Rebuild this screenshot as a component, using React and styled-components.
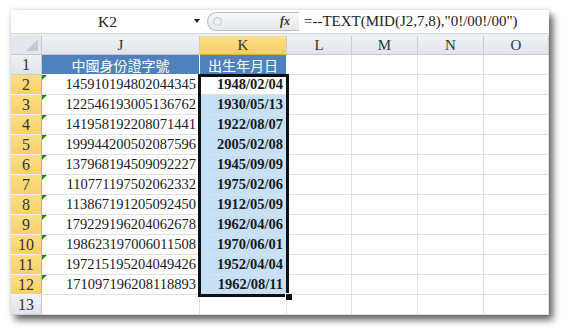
import styled, {createGlobalStyle} from "styled-components";

const GlobalStyle = createGlobalStyle`
  html, body {
    margin: 0;
    padding: 0;
    background: #ffffff;
  }
`;

const SERIF = `"Liberation Serif", "Times New Roman", serif`;
const CJK = `"Noto Sans CJK TC", "Noto Sans", sans-serif`;

const Page = styled.div`
  width: 567px;
  height: 335px;
  padding: 10px 0 0 11px;
  box-sizing: border-box;
`;

const Window = styled.div`
  width: 538px;
  background: #fff;
  box-shadow: 4px 5px 7px rgba(0, 0, 0, 0.6), 0 0 5px rgba(0, 0, 0, 0.12);
`;

const FormulaBar = styled.div`
  display: flex;
  align-items: center;
  height: 23px;
  background: #fff;
  border-bottom: 1px solid #d4d7dc;
`;

const NameBox = styled.div`
  position: relative;
  width: 193px;
  height: 100%;
  display: flex;
  align-items: center;
  justify-content: center;
  font-family: ${SERIF};
  font-size: 15.5px;
  color: #222;
`;

const Arrow = styled.span`
  position: absolute;
  right: 4px;
  top: 9px;
  width: 0;
  height: 0;
  border-left: 3px solid transparent;
  border-right: 3px solid transparent;
  border-top: 4px solid #222;
`;

const FxPill = styled.div`
  display: flex;
  align-items: center;
  justify-content: space-between;
  width: 92px;
  height: 19px;
  margin-left: 3px;
  padding: 0 9px 0 5px;
  box-sizing: border-box;
  border: 1px solid #b9bec6;
  border-right: none;
  border-radius: 10px 0 0 10px;
  background: linear-gradient(#f7f8f9, #e6e8eb);
`;

const Knob = styled.span`
  width: 7px;
  height: 7px;
  border-radius: 50%;
  border: 1px solid #c6cacf;
  background: #eef0f2;
`;

const Fx = styled.span`
  font-family: ${SERIF};
  font-style: italic;
  font-weight: bold;
  font-size: 12px;
  color: #333;
`;

const FormulaText = styled.div`
  flex: 1;
  padding-left: 5px;
  font-family: ${SERIF};
  font-size: 15px;
  color: #222;
  white-space: nowrap;
`;

const Strip = styled.div`
  height: 2px;
  background: #eceef1;
`;

const SheetArea = styled.div`
  position: relative;
`;

const Grid = styled.div`
  display: grid;
  grid-template-columns: 31px 158px 87px 65px 66px 66px 65px;
  grid-template-rows: 19px repeat(13, 20px);
`;

const Corner = styled.div`
  position: relative;
  background: #e4e8ee;
  border-right: 1px solid #c3c8cf;
  border-bottom: 1px solid #c3c8cf;
  &::after {
    content: "";
    position: absolute;
    right: 3px;
    bottom: 3px;
    border-left: 12px solid transparent;
    border-bottom: 12px solid #c6cbd1;
  }
`;

const ColHead = styled.div`
  display: flex;
  align-items: center;
  justify-content: center;
  font-family: ${SERIF};
  font-size: 15px;
  color: #333;
  border-right: 1px solid #c9cdd3;
  border-bottom: 1px solid ${(p) => (p.$active ? "#e2b43d" : "#c3c8cf")};
  background: ${(p) =>
    p.$active ? "linear-gradient(#fbe28f, #f6cf5e)" : "linear-gradient(#eef1f5, #e1e5eb)"};
`;

const RowHead = styled.div`
  display: flex;
  align-items: center;
  justify-content: center;
  font-family: ${SERIF};
  font-size: 16px;
  color: #333;
  border-right: 1px solid ${(p) => (p.$active ? "#e2b43d" : "#c3c8cf")};
  border-bottom: 1px solid ${(p) => (p.$active ? "#f2f2f2" : "#c9cdd3")};
  background: ${(p) =>
    p.$active ? "linear-gradient(#fbdf86, #f6d06a)" : "linear-gradient(#eef1f5, #e1e5eb)"};
`;

const Cell = styled.div`
  position: relative;
  display: flex;
  align-items: center;
  justify-content: ${(p) => (p.$center ? "center" : "flex-end")};
  padding: 0 ${(p) => (p.$center ? 0 : 3)}px 0 0;
  box-sizing: border-box;
  border-right: 1px solid ${(p) => (p.$head ? "#ffffff" : "#dfe0e1")};
  border-bottom: 1px solid ${(p) => (p.$head ? "#ffffff" : "#dfe0e1")};
  background: ${(p) => p.$bg || "#fff"};
  font-family: ${(p) => (p.$head ? CJK : SERIF)};
  font-size: ${(p) => (p.$head ? 14 : 14.5)}px;
  font-weight: ${(p) => (p.$bold ? 700 : 400)};
  color: ${(p) => (p.$head ? "#fff" : "#1a1a1a")};
  white-space: nowrap;
  overflow: hidden;
  &::before {
    content: "";
    display: ${(p) => (p.$flag ? "block" : "none")};
    position: absolute;
    left: 0;
    top: 0;
    border-top: 5px solid #1f8a2a;
    border-right: 5px solid transparent;
  }
`;

const Selection = styled.div`
  position: absolute;
  left: 187px;
  top: 38px;
  width: 91px;
  height: 223px;
  box-sizing: border-box;
  border: 3px solid #111;
  pointer-events: none;
`;

const Handle = styled.div`
  position: absolute;
  left: 274px;
  top: 257px;
  width: 6px;
  height: 6px;
  background: #111;
  border: 1px solid #fff;
`;

const ids = [
  ["145910194802044345", "1948/02/04"],
  ["122546193005136762", "1930/05/13"],
  ["141958192208071441", "1922/08/07"],
  ["199944200502087596", "2005/02/08"],
  ["137968194509092227", "1945/09/09"],
  ["110771197502062332", "1975/02/06"],
  ["113867191205092450", "1912/05/09"],
  ["179229196204062678", "1962/04/06"],
  ["198623197006011508", "1970/06/01"],
  ["197215195204049426", "1952/04/04"],
  ["171097196208118893", "1962/08/11"],
];

const cols = ["J", "K", "L", "M", "N", "O"];

const Blank = () => (
  <>
    <Cell />
    <Cell />
    <Cell />
    <Cell />
  </>
);

export default function App() {
  return (
    <Page>
      <GlobalStyle />
      <Window>
        <FormulaBar>
          <NameBox>
            K2
            <Arrow />
          </NameBox>
          <FxPill>
            <Knob />
            <Fx>fx</Fx>
          </FxPill>
          <FormulaText>=--TEXT(MID(J2,7,8),"0!/00!/00")</FormulaText>
        </FormulaBar>
        <Strip />
        <SheetArea>
          <Grid>
            <Corner />
            {cols.map((c) => (
              <ColHead key={c} $active={c === "K"}>
                {c}
              </ColHead>
            ))}

            <RowHead>1</RowHead>
            <Cell $head $center $bg="#4f81bd">中國身份證字號</Cell>
            <Cell $head $center $bg="#4f81bd">出生年月日</Cell>
            <Blank />

            {ids.map(([id, date], i) => (
              <Row key={id} n={i + 2} id={id} date={date} />
            ))}

            <RowHead>13</RowHead>
            <Cell />
            <Cell />
            <Blank />
          </Grid>
          <Selection />
          <Handle />
        </SheetArea>
      </Window>
    </Page>
  );
}

function Row({n, id, date}) {
  return (
    <>
      <RowHead $active>{n}</RowHead>
      <Cell $flag>{id}</Cell>
      <Cell $bold $bg={n === 2 ? "#fff" : "#c6e0f8"}>
        {date}
      </Cell>
      <Blank />
    </>
  );
}
